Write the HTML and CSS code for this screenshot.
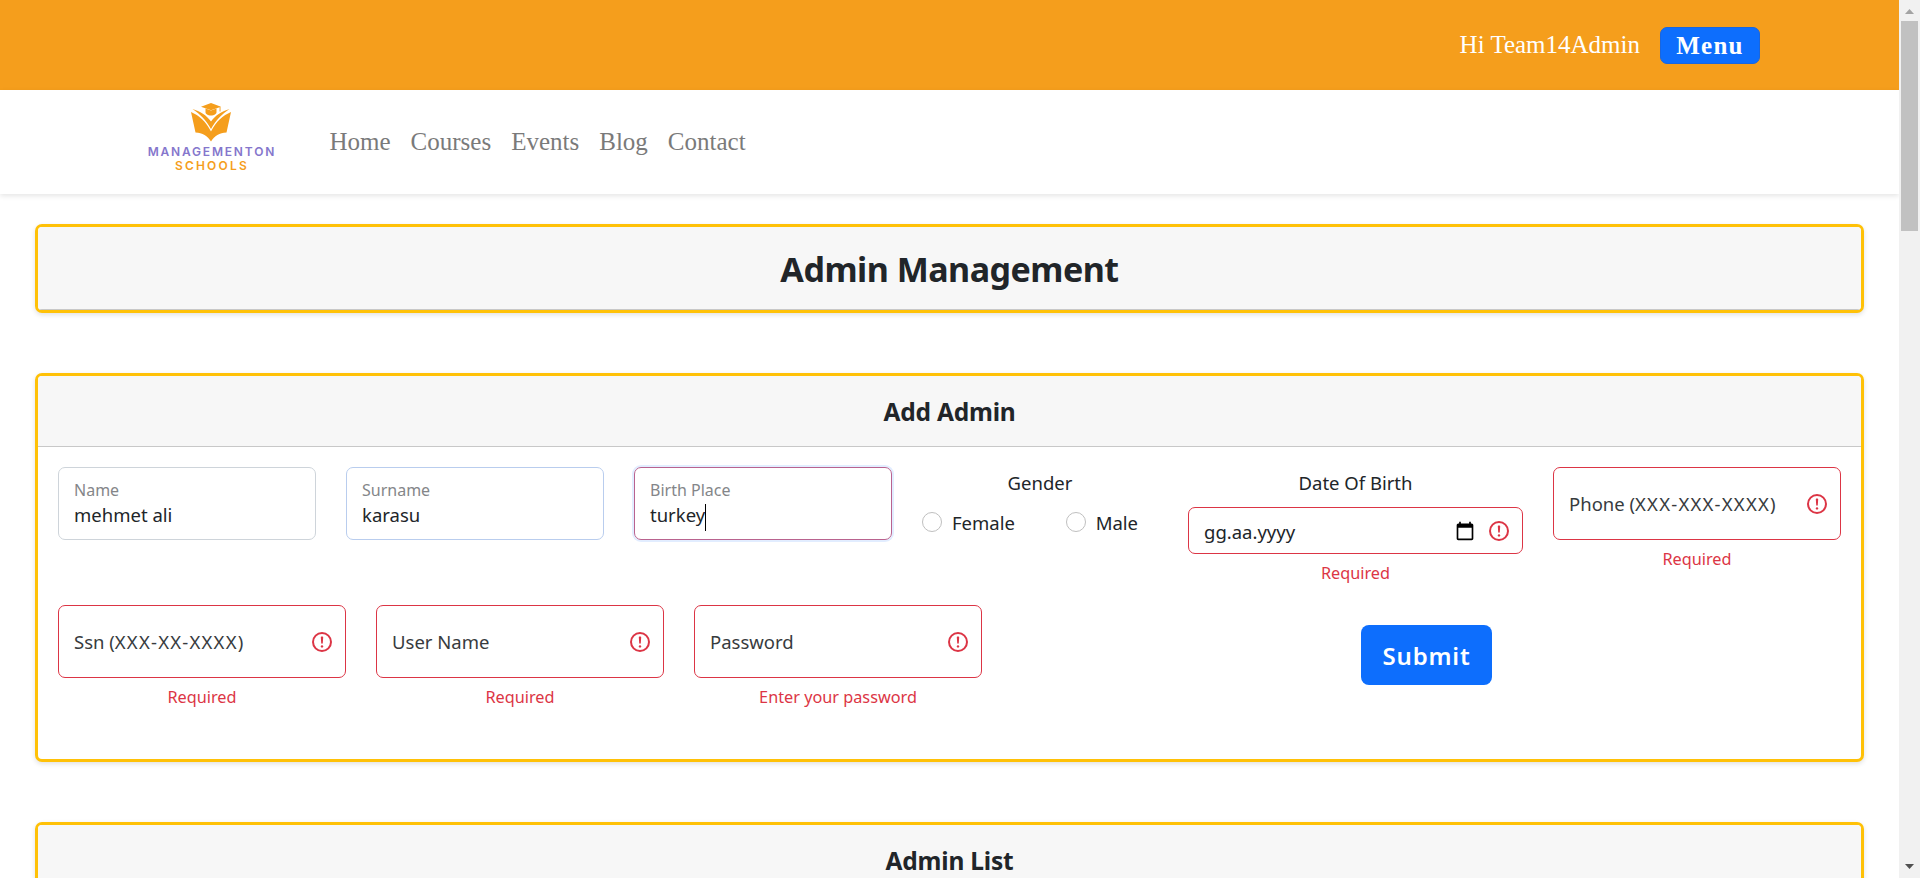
FILE: index.html
```html
<!DOCTYPE html>
<html lang="en">
<head>
<meta charset="utf-8">
<title>Admin Management</title>
<link rel="stylesheet" href="styles.css">
</head>
<body>
<svg class="defs" width="0" height="0"><defs>
<symbol id="alert" viewBox="0 0 12 12"><circle cx="6" cy="6" r="4.500" fill="none" stroke="#dc3545" stroke-width="1"/><path d="M5.800 3.600h.4L6 6.500z" fill="#dc3545" stroke="#dc3545" stroke-width=".8" stroke-linejoin="round"/><circle cx="6" cy="8.200" r=".6" fill="#dc3545"/></symbol>
</defs></svg>
<div class="window">
<div class="page">
  <div class="topbar"><span class="hello">Hi Team14Admin</span><button class="menu">Menu</button></div>
  <header class="navbar">
    <a class="logo">
      <svg class="mark" viewBox="0 0 40 39" width="40" height="39"><g fill="#f59e1c"><path d="M0 9c8 3.500 15 9.500 20 19.500C25 18.500 32 12.500 40 9l-4.500 20.500c-7 .5-12 3-15.500 9-3.500-6-8.500-8.500-15.500-9z"/><path d="M1.500 6C9 8.500 15.500 12 20 18.500 24.500 12 31 8.500 38.500 6 31 11 25 17 20 26 15 17 9 11 1.500 6z"/><path d="M20 0l10 3.700-10 3.600-10-3.600z"/><path d="M14.500 5.500L20 7.400l5.500-1.900v3.700c0 1.800-2.500 3.400-5.500 3.400s-5.500-1.600-5.500-3.400z"/><path d="M28.600 4h.9v4.400h-.9z"/></g></svg>
      <span class="brand">MANAGEMENTON</span><span class="brand schools">SCHOOLS</span>
    </a>
    <nav class="links"><a>Home</a><a>Courses</a><a>Events</a><a>Blog</a><a>Contact</a></nav>
  </header>
  <main class="content">
    <section class="card title-card"><h1 class="card-head title">Admin Management</h1></section>
    <section class="card form-card">
      <h2 class="card-head subtitle">Add Admin</h2>
      <div class="row">
        <div class="field"><div class="box"><span class="label">Name</span><span class="value">mehmet ali</span></div></div>
        <div class="field"><div class="box leaving"><span class="label">Surname</span><span class="value">karasu</span></div></div>
        <div class="field"><div class="box focused"><span class="label">Birth Place</span><span class="value">turkey<i class="caret"></i></span></div></div>
        <div class="gender"><span class="caption">Gender</span>
          <div class="options"><label class="option"><i class="radio"></i>Female</label><label class="option"><i class="radio"></i>Male</label></div>
        </div>
        <div class="dob"><span class="caption">Date Of Birth</span>
          <div class="box invalid date"><span class="value">gg.aa.yyyy</span>
            <svg class="calendar" width="20" height="20" viewBox="0 0 24 24"><path d="M20 3h-1V1h-2v2H7V1H5v2H4c-1.100 0-2 .9-2 2v16c0 1.100.9 2 2 2h16c1.100 0 2-.9 2-2V5c0-1.100-.9-2-2-2zm0 18H4V8h16v13z"/></svg>
            <svg class="alert"><use href="#alert"/></svg></div>
          <span class="error">Required</span></div>
        <div class="field wide"><div class="box invalid"><span class="value hint">Phone (<span class="pattern">XXX-XXX-XXXX)</span></span><svg class="alert"><use href="#alert"/></svg></div><span class="error">Required</span></div>
      </div>
      <div class="row second">
        <div class="field wide"><div class="box invalid"><span class="value hint">Ssn (<span class="pattern">XXX-XX-XXXX)</span></span><svg class="alert"><use href="#alert"/></svg></div><span class="error">Required</span></div>
        <div class="field wide"><div class="box invalid"><span class="value hint">User Name</span><svg class="alert"><use href="#alert"/></svg></div><span class="error">Required</span></div>
        <div class="field wide"><div class="box invalid"><span class="value hint">Password</span><svg class="alert"><use href="#alert"/></svg></div><span class="error">Enter your password</span></div>
        <div class="submit-cell"><button class="submit">Submit</button></div>
      </div>
    </section>
    <section class="card list-card"><h2 class="card-head subtitle">Admin List</h2></section>
  </main>
</div>
<div class="scrollbar">
  <svg class="arrow" width="9" height="5" viewBox="0 0 9 5"><path d="M0 5L4.500 0 9 5z" fill="#a3a3a3"/></svg>
  <div class="thumb"></div>
  <svg class="arrow down" width="9" height="5" viewBox="0 0 9 5"><path d="M0 0L4.500 5 9 0z" fill="#505050"/></svg>
</div>
</div>
</body>
</html>
```
FILE: styles.css
```css
* { box-sizing: border-box; }
body { margin: 0; background: #fff; color: #212529; font-family: "Noto Sans", "Open Sans", sans-serif; overflow: hidden; }
.defs { position: absolute; }
.window { display: flex; height: 878px; overflow: hidden; }
.page { width: 1899px; height: 878px; overflow: hidden; }
.topbar { height: 90px; background: #f59e1c; display: flex; align-items: center; justify-content: flex-end; gap: 20px; padding-right: 139px; font-family: "Liberation Serif", serif; font-size: 25px; color: #fff; }
.menu { width: 100px; height: 37px; margin-top: 1px; padding: 0; border: 1px solid #1a66dd; border-radius: 7px; background: #0d6efd; color: #fff; font: bold 25px/33px "Liberation Serif", serif; letter-spacing: 1.250px; }
.navbar { height: 104px; display: flex; padding-left: 147px; box-shadow: 0 2px 5px rgba(0,0,0,.1); }
.logo { width: 128px; height: 84px; padding-top: 13px; display: flex; flex-direction: column; align-items: center; }
.brand { font: 600 12px/14px "Inter", sans-serif; letter-spacing: 1.800px; margin-right: -1.800px; color: #8576cc; white-space: nowrap; }
.mark { flex: none; margin-bottom: 3px; }
.schools { color: #f59e1c; letter-spacing: 2.200px; }
.links { display: flex; gap: 20px; padding: 37px 0 0 54.500px; font: 25px/29px "Liberation Serif", serif; color: #7a7a7a; }
.content { padding: 30px 35px 0; }
.card { border: 3px solid #ffc107; border-radius: 7px; background: #fff; box-shadow: 0 2px 5px rgba(0,0,0,.12); overflow: hidden; }
.card-head { margin: 0; background: #f7f7f7; border-bottom: 1px solid #c8c8c8; text-align: center; font-weight: 700; }
.title { height: 83px; font-size: 34px; line-height: 84px; letter-spacing: -.500px; }
.form-card { margin-top: 60px; height: 389px; }
.subtitle { height: 71px; font-size: 24.500px; line-height: 71px; letter-spacing: -.200px; }
.row { display: flex; gap: 30px; padding: 20px 20px 0; height: 138px; }
.field { width: 258px; text-align: center; }
.wide { width: 288px; }
.box { position: relative; height: 73px; border: 1px solid #ced4da; border-radius: 7px; padding: 10px 15px 0; display: flex; flex-direction: column; text-align: left; }
.leaving { border-color: #b9cdee; }
.focused { border-color: #b9638f; box-shadow: 0 0 0 2px #e2edff; }
.label { font-size: 16px; line-height: 24px; color: #848689; }
.value { font-size: 18.500px; line-height: 25px; }
.caret { display: inline-block; width: 1px; height: 27px; margin: -1px 0; background: #000; vertical-align: middle; }
.invalid { border-color: #dc3545; flex-direction: row; align-items: center; padding: 0 11px 0 15px; }
.hint { color: #373b3e; }
.pattern { letter-spacing: 1.220px; }
.alert { width: 24px; height: 24px; margin-left: auto; }
.error { display: block; margin-top: 5px; font-size: 16.250px; line-height: 28px; color: #dc3545; text-align: center; }
.gender { width: 236px; text-align: center; }
.caption { display: block; font-size: 18.500px; line-height: 30px; padding-top: 1px; text-align: center; }
.options { display: flex; justify-content: space-between; padding: 10px 20px 0 0; }
.option { display: flex; align-items: center; gap: 10px; font-size: 18.500px; line-height: 30px; }
.radio { width: 20px; height: 20px; border: 1px solid #bfbfbf; border-radius: 50%; margin-top: -2px; }
.dob { width: 335px; }
.date { height: 47px; margin-top: 9px; }
.date .value { padding-top: 2px; }
.calendar { margin-left: auto; margin-right: 12px; }
.date .alert { margin-left: 0; }
.submit-cell { flex: 1; text-align: center; padding-top: 20px; }
.submit { width: 131px; height: 60px; border: 0; border-radius: 8px; background: #0d6efd; color: #fff; font: 600 24px "Noto Sans", sans-serif; letter-spacing: .800px; padding: 0; }
.list-card { margin-top: 60px; height: 200px; }
.scrollbar { width: 21px; height: 878px; background: #f1f1f1; display: flex; flex-direction: column; align-items: center; padding: 9px 0; }
.thumb { width: 17px; height: 210px; background: #c1c1c1; margin-top: 7px; }
.down { margin-top: auto; }
```
